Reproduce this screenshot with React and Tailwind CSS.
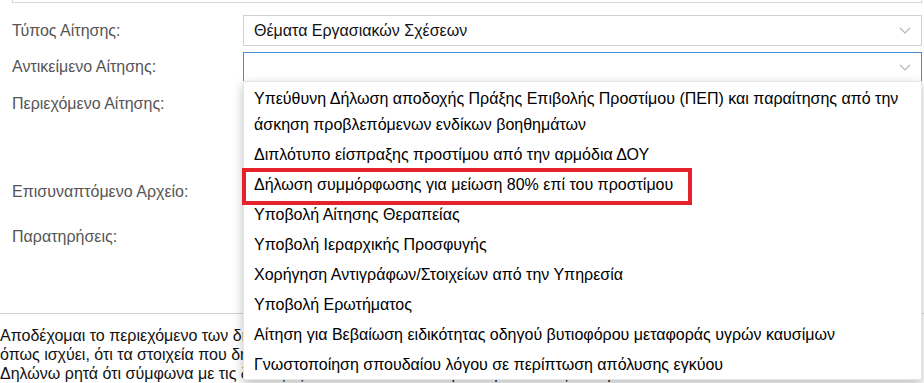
import React from 'react';

const items = [
  'Υπεύθυνη Δήλωση αποδοχής Πράξης Επιβολής Προστίμου (ΠΕΠ) και παραίτησης από την άσκηση προβλεπόμενων ενδίκων βοηθημάτων',
  'Διπλότυπο είσπραξης προστίμου από την αρμόδια ΔΟΥ',
  'Δήλωση συμμόρφωσης για μείωση 80% επί του προστίμου',
  'Υποβολή Αίτησης Θεραπείας',
  'Υποβολή Ιεραρχικής Προσφυγής',
  'Χορήγηση Αντιγράφων/Στοιχείων από την Υπηρεσία',
  'Υποβολή Ερωτήματος',
  'Αίτηση για Βεβαίωση ειδικότητας οδηγού βυτιοφόρου μεταφοράς υγρών καυσίμων',
  'Γνωστοποίηση σπουδαίου λόγου σε περίπτωση απόλυσης εγκύου',
];

const Chevron = () => (
  <svg width="12" height="7" viewBox="0 0 12 7" className="text-[#b5b5b5]">
    <polyline points="1,1 6,6 11,1" fill="none" stroke="currentColor" strokeWidth="1.2" />
  </svg>
);

const Label = ({ children, className = '' }) => (
  <div className={`w-[231px] shrink-0 text-[16px] leading-[18px] text-[#555] ${className}`}>{children}</div>
);

const App = () => {
  return (
    <div className="relative w-[924px] h-[383px] overflow-hidden bg-white font-['Liberation_Sans',Arial,sans-serif]">
      {/* previous panel edge */}
      <div className="ml-[12px] mr-[2px] h-[3px] border-x border-b border-[#d6d6d6]" />

      <div className="ml-[12px] mr-[2px] mt-[12px] flex flex-col">
        {/* Τύπος */}
        <div className="flex h-[31px] items-center">
          <Label>Τύπος Αίτησης:</Label>
          <div className="flex h-full flex-1 items-center justify-between border border-[#d0d0d0] pl-[10px] pr-[10px] text-[16px] text-[#111]">
            <span>Θέματα Εργασιακών Σχέσεων</span>
            <Chevron />
          </div>
        </div>

        {/* Αντικείμενο */}
        <div className="mt-[6px] flex h-[30px] items-center">
          <Label>Αντικείμενο Αίτησης:</Label>
          <div className="relative flex h-full flex-1 items-center justify-end border border-[#4a8fd6] pr-[10px]">
            <Chevron />
            {/* open list */}
            <div className="absolute left-[-1px] right-[-1px] top-full z-10 h-[299px] border border-black/10 bg-white pt-[2px] text-[16px] leading-[26px] text-[#000] shadow-[0_4px_10px_rgba(0,0,0,0.25)]">
              {items.map((t) => (
                <div key={t} className="px-[10px] py-[2px]">
                  {t}
                </div>
              ))}
            </div>
          </div>
        </div>

        {/* Περιεχόμενο */}
        <div className="mt-[6px] flex h-[82px]">
          <Label className="pt-[7px]">Περιεχόμενο Αίτησης:</Label>
          <div className="flex-1 border border-[#d0d0d0]" />
        </div>

        {/* Αρχείο */}
        <div className="mt-[7px] flex h-[30px] items-center">
          <Label>Επισυναπτόμενο Αρχείο:</Label>
          <div className="h-full flex-1" />
        </div>

        {/* Παρατηρήσεις */}
        <div className="mt-[15px] flex h-[74px]">
          <Label className="pt-[6px]">Παρατηρήσεις:</Label>
          <div className="flex-1 border border-[#d0d0d0]" />
        </div>
      </div>

      <div className="mt-[17px] h-px w-full bg-[#d0d0d0]" />

      <p className="mt-[12px] whitespace-nowrap text-[16px] leading-[19px] text-[#111]">
        Αποδέχομαι το περιεχόμενο των δηλώσεων και των όρων χρήσης της ηλεκτρονικής υπηρεσίας, σύμφωνα με το νόμο
        <br />
        όπως ισχύει, ότι τα στοιχεία που δηλώνω είναι αληθή και ακριβή και ότι έλαβα γνώση των προϋποθέσεων
        <br />
        Δηλώνω ρητά ότι σύμφωνα με τις διατάξεις του Γενικού Κανονισμού Προστασίας Δεδομένων συναινώ
      </p>

      {/* highlight annotation */}
      <div className="pointer-events-none absolute left-[242px] top-[168px] z-20 h-[37px] w-[450px] border-4 border-[#e5222b]" />
    </div>
  );
};

export default App;
